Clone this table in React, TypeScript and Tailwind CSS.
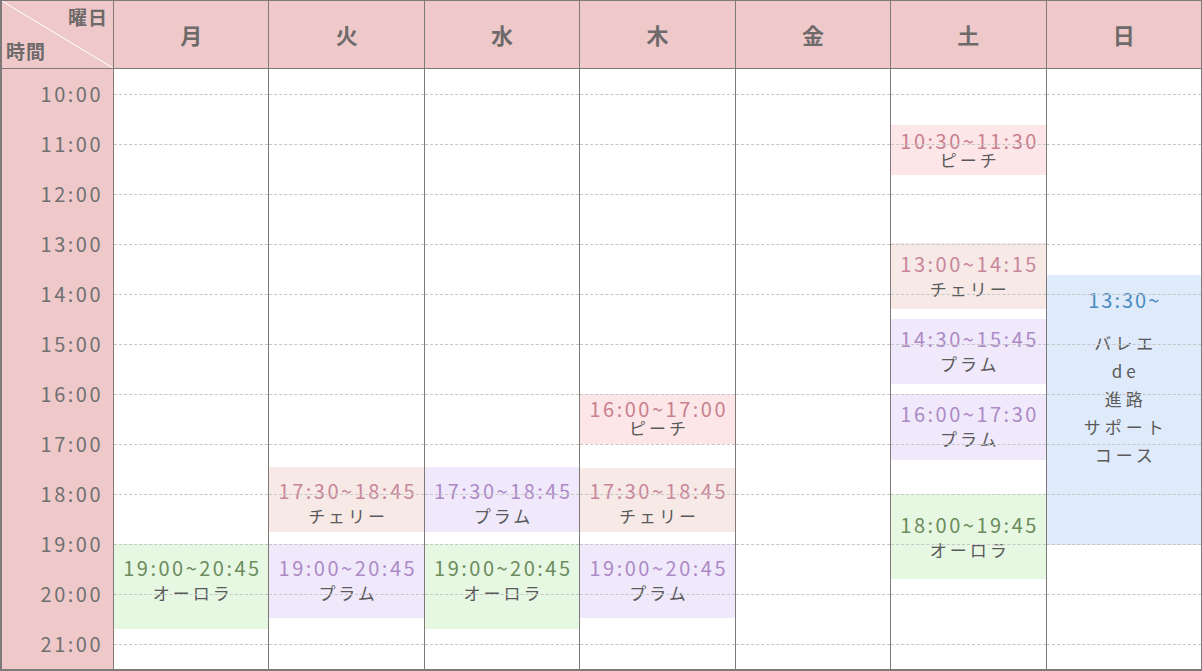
import React from "react";

const FONT = "font-['Noto_Sans_CJK_JP','Noto_Sans',sans-serif]";

const TIMES = ["10:00", "11:00", "12:00", "13:00", "14:00", "15:00", "16:00", "17:00", "18:00", "19:00", "20:00", "21:00"];
const DAYS = ["月", "火", "水", "木", "金", "土", "日"];

const KIND = {
  peach: { bg: "bg-[#fde6e7]", fg: "text-[#c8808f]" },
  cherry: { bg: "bg-[#f7e9e6]", fg: "text-[#c8869a]" },
  plum: { bg: "bg-[#efe9fb]", fg: "text-[#ad8ac6]" },
  aurora: { bg: "bg-[#e6f7e2]", fg: "text-[#6b8c5c]" },
};

type Ev = { top: number; h: number; pad: number; gap: number; time: string; name: string; kind: keyof typeof KIND };

// px from the 9:30 edge of the body; pad = centre of the time line from box top, gap = distance to the name line
const EVENTS: Ev[][] = [
  [{ top: 475, h: 85, pad: 24, gap: 25, time: "19:00~20:45", name: "オーロラ", kind: "aurora" }],
  [
    { top: 398, h: 65, pad: 24, gap: 25, time: "17:30~18:45", name: "チェリー", kind: "cherry" },
    { top: 475, h: 74, pad: 24, gap: 25, time: "19:00~20:45", name: "プラム", kind: "plum" },
  ],
  [
    { top: 398, h: 65, pad: 24, gap: 25, time: "17:30~18:45", name: "プラム", kind: "plum" },
    { top: 475, h: 85, pad: 24, gap: 25, time: "19:00~20:45", name: "オーロラ", kind: "aurora" },
  ],
  [
    { top: 325, h: 50, pad: 15, gap: 19, time: "16:00~17:00", name: "ピーチ", kind: "peach" },
    { top: 399, h: 64, pad: 23, gap: 25, time: "17:30~18:45", name: "チェリー", kind: "cherry" },
    { top: 475, h: 74, pad: 24, gap: 25, time: "19:00~20:45", name: "プラム", kind: "plum" },
  ],
  [],
  [
    { top: 56, h: 50, pad: 16, gap: 19, time: "10:30~11:30", name: "ピーチ", kind: "peach" },
    { top: 174, h: 66, pad: 21, gap: 25, time: "13:00~14:15", name: "チェリー", kind: "cherry" },
    { top: 250, h: 65, pad: 20, gap: 25, time: "14:30~15:45", name: "プラム", kind: "plum" },
    { top: 325, h: 66, pad: 20, gap: 25, time: "16:00~17:30", name: "プラム", kind: "plum" },
    { top: 425, h: 85, pad: 31, gap: 25, time: "18:00~19:45", name: "オーロラ", kind: "aurora" },
  ],
  [],
];

function Lines() {
  return (
    <div className="absolute inset-0 z-10 pointer-events-none flex flex-col">
      {TIMES.map((t) => (
        <div key={t} className="h-[50px] shrink-0">
          <div className="h-[26px] border-b border-dashed border-[#c6c6c6]" />
        </div>
      ))}
    </div>
  );
}

function Event({ ev }: { ev: Ev }) {
  const k = KIND[ev.kind];
  // time line 20px tall, name line 18px tall: centres are 19px apart with no margin
  return (
    <div
      className={`absolute left-0 right-0 flex flex-col items-center ${k.bg}`}
      style={{ top: ev.top, height: ev.h, paddingTop: ev.pad - 10 }}
    >
      <div className={`text-[20px] leading-[20px] tracking-[2.5px] pl-[2.5px] ${k.fg}`}>{ev.time}</div>
      <div className="text-[17px] leading-[18px] tracking-[3px] pl-[3px] text-[#5a5a5a]" style={{ marginTop: ev.gap - 19 }}>
        {ev.name}
      </div>
    </div>
  );
}

function SundayCourse() {
  return (
    <div className="absolute left-0 right-0 top-[206px] h-[270px] bg-[#dfeafa] flex flex-col items-center pt-[11px]">
      <div className="text-[20px] tracking-[2px] pl-[2px] leading-[28px] text-[#4a8cc0]">13:30~</div>
      <div className="mt-[15px] flex flex-col items-center text-[17px] tracking-[4px] pl-[4px] leading-[28px] text-[#5a5a5a]">
        <span>バレエ</span>
        <span>de</span>
        <span>進路</span>
        <span>サポート</span>
        <span>コース</span>
      </div>
    </div>
  );
}

export default function App() {
  return (
    <div className={`w-[1202px] h-[671px] bg-white ${FONT}`}>
      <div className="flex flex-col h-full border-t border-r border-l-2 border-b-2 border-[#7f7a7a]">
        {/* header */}
        <div className="grid grid-cols-[111px_repeat(7,minmax(0,1fr))] h-[68px] shrink-0 border-b border-[#7f7a7a] bg-[#efc9ca]">
          <div className="relative font-bold text-[19px] text-[#6e6a6a]">
            <svg className="absolute inset-0" width="111" height="67" viewBox="0 0 111 67">
              <line x1="0" y1="0" x2="111" y2="67" stroke="#ffffff" strokeWidth="1" />
            </svg>
            <div className="relative flex flex-col h-full px-[4px]">
              <div className="self-end pr-[1px] pt-[4px] leading-[24px] tracking-[1px]">曜日</div>
              <div className="mt-[10px] leading-[24px] tracking-[1px]">時間</div>
            </div>
          </div>
          {DAYS.map((d) => (
            <div key={d} className="border-l border-[#7f7a7a] flex items-center justify-center text-[22px] font-bold text-[#6e6a6a]">
              {d}
            </div>
          ))}
        </div>

        {/* body */}
        <div className="grid grid-cols-[111px_repeat(7,minmax(0,1fr))] h-[600px] shrink-0">
          <div className="bg-[#efc9ca] flex flex-col">
            {TIMES.map((t) => (
              <div key={t} className="h-[50px] shrink-0 flex items-center justify-end pr-[10px] text-[20px] tracking-[2.5px] text-[#707070]">
                {t}
              </div>
            ))}
          </div>
          {DAYS.map((d, i) => (
            <div key={d} className="relative border-l border-[#7f7a7a]">
              {EVENTS[i].map((ev) => (
                <Event key={ev.time} ev={ev} />
              ))}
              {i === 6 && <SundayCourse />}
              <Lines />
            </div>
          ))}
        </div>
      </div>
    </div>
  );
}
